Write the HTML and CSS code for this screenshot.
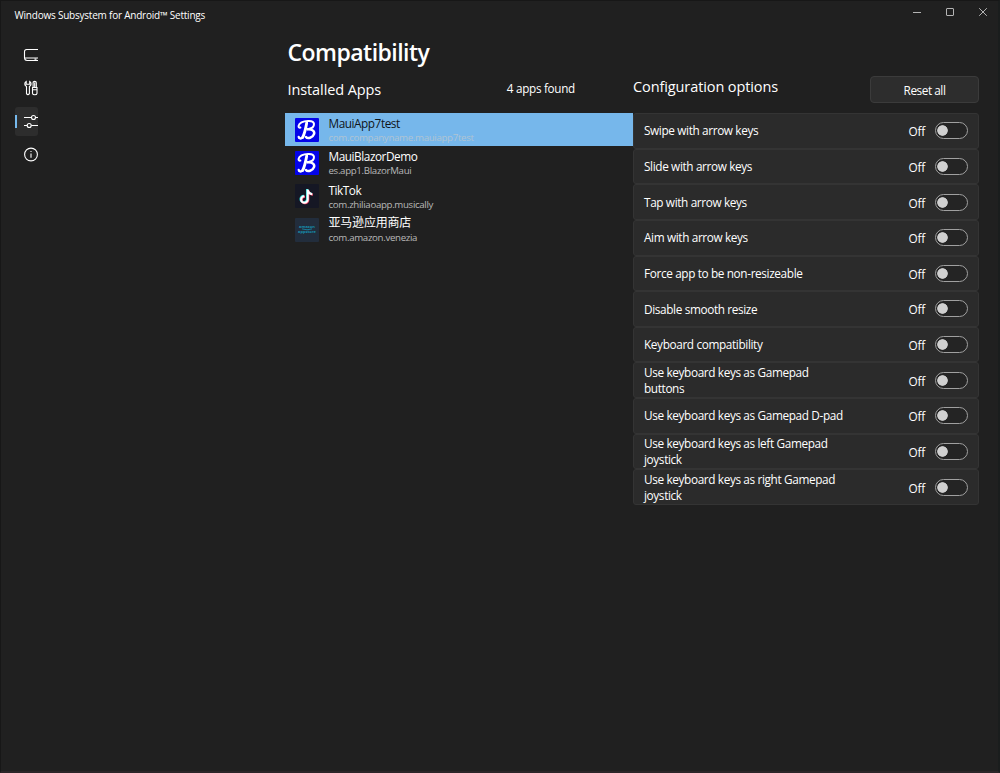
FILE: index.html
```
<!DOCTYPE html>
<html lang="en">
<head>
<meta charset="utf-8">
<title>Windows Subsystem for Android™ Settings</title>
<link rel="stylesheet" href="styles.css">
</head>
<body>
<svg class="defs" width="0" height="0" aria-hidden="true">
  <symbol id="maui" viewBox="0 0 24 24">
    <rect width="24" height="24" rx="1" fill="#0404e8"/>
    <g fill="none" stroke="#fff" stroke-linecap="round" stroke-linejoin="round">
      <path stroke-width="2.900" d="M11.700 5C10.800 10 9.800 15.500 7.600 19.500"/>
      <path stroke-width="2" d="M5.400 9.600C2.600 10 3 6.300 6.500 4.300C10 2.500 18.600 1.900 19 5.800C19.200 9.200 16 10.800 12.600 11.200"/>
      <path stroke-width="2.500" d="M12.800 11.300C17.500 11 20 13.400 19 16.200C17.800 19.800 12.500 21.200 11 19"/>
      <path stroke-width="2.300" d="M7.400 19.700C6 21 3.800 20.700 3.700 18.900"/>
    </g>
  </symbol>
</svg>
<div class="window">
  <header class="titlebar">
    <span class="title">Windows Subsystem for Android™ Settings</span>
    <div class="controls">
      <svg width="10" height="10" viewBox="0 0 10 10"><path d="M1 5.500h8"/></svg>
      <svg width="10" height="10" viewBox="0 0 10 10"><rect x="1.500" y="1.500" width="7" height="7" rx=".5"/></svg>
      <svg width="10" height="10" viewBox="0 0 10 10"><path d="M1.200 1.200l7.600 7.600M8.800 1.200L1.200 8.800"/></svg>
    </div>
  </header>
  <div class="body">
    <nav class="nav">
      <a class="nav-item"><svg viewBox="0 0 15 16"><path d="M15 2.500H3.700Q1.500 2.500 1.500 4.700V10.500Q1.500 13.500 4.200 13.500H15M1.500 11H15M11.500 12.200h2"/></svg></a>
      <a class="nav-item"><svg viewBox="0 0 15 16"><path d="M3.200 1.400C1.300 2.400 1.200 5.300 3.500 6.500V13.600Q4.900 15.600 6.400 13.600V6.500C8.700 5.300 8.500 2.400 6.700 1.400V4.200H3.200ZM10.100 7.300V2.800Q10.100 1.400 11.700 1.400T13.300 2.800V7.300M9.500 7.500H14V13.300Q13.800 14.700 11.800 14.700T9.500 13.300ZM9.500 9.700H14M11.700 2.500V7"/></svg></a>
      <a class="nav-item selected"><svg viewBox="0 0 15 16"><path d="M1 4.500H8.500M12.600 4.500H15M1 12.500H4.200M8.300 12.500H15"/><circle cx="10.500" cy="4.500" r="2"/><circle cx="6.200" cy="12.500" r="2"/></svg></a>
      <a class="nav-item"><svg viewBox="0 0 15 16"><circle cx="8" cy="7.500" r="6.400"/><path d="M8 6.500v4.300M8 4v1.100"/></svg></a>
    </nav>
    <main class="main">
      <h1>Compatibility</h1>
      <div class="columns">
        <section class="apps">
          <div class="apps-head"><h2>Installed Apps</h2><span class="count">4 apps found</span></div>
          <ul class="app-list">
            <li class="app active"><svg class="logo"><use href="#maui"/></svg><div><div class="name">MauiApp7test</div><div class="pkg">com.companyname.mauiapp7test</div></div></li>
            <li class="app"><svg class="logo"><use href="#maui"/></svg><div><div class="name">MauiBlazorDemo</div><div class="pkg">es.app1.BlazorMaui</div></div></li>
            <li class="app"><svg class="logo" viewBox="0 0 24 24"><rect width="24" height="24" rx="1" fill="#151724"/><g fill="none" stroke-width="2.100"><path stroke="#27e0df" d="M12.100 5v10a3.300 3.300 0 1 1-3.300-3.300M12.100 5.500q.7 3.700 4.600 4.200"/><path stroke="#f33b62" d="M13.300 6v10a3.300 3.300 0 1 1-3.300-3.300M13.300 6.500q.7 3.700 4.600 4.200"/><path stroke="#fff" d="M12.700 5.500v10a3.300 3.300 0 1 1-3.300-3.300M12.700 6q.7 3.700 4.600 4.200"/></g></svg><div><div class="name">TikTok</div><div class="pkg">com.zhiliaoapp.musically</div></div></li>
            <li class="app"><svg class="logo" viewBox="0 0 24 24"><rect width="24" height="24" rx="1" fill="#222d3c"/><g class="store"><text x="12" y="10.300" text-anchor="middle">amazon</text><text x="12" y="15.300" text-anchor="middle">appstore</text></g><path fill="none" stroke="#168fae" stroke-width=".8" d="M7 10.900q5 1.800 10 0"/></svg><div><div class="name cjk">亚马逊应用商店</div><div class="pkg">com.amazon.venezia</div></div></li>
          </ul>
        </section>
        <section class="config">
          <div class="config-head"><h2>Configuration options</h2><button class="reset">Reset all</button></div>
          <div class="options">
            <div class="option"><span class="label">Swipe with arrow keys</span><span class="off">Off</span><i class="toggle"></i></div>
            <div class="option"><span class="label">Slide with arrow keys</span><span class="off">Off</span><i class="toggle"></i></div>
            <div class="option"><span class="label">Tap with arrow keys</span><span class="off">Off</span><i class="toggle"></i></div>
            <div class="option"><span class="label">Aim with arrow keys</span><span class="off">Off</span><i class="toggle"></i></div>
            <div class="option"><span class="label">Force app to be non-resizeable</span><span class="off">Off</span><i class="toggle"></i></div>
            <div class="option"><span class="label">Disable smooth resize</span><span class="off">Off</span><i class="toggle"></i></div>
            <div class="option"><span class="label">Keyboard compatibility</span><span class="off">Off</span><i class="toggle"></i></div>
            <div class="option"><span class="label">Use keyboard keys as Gamepad<br>buttons</span><span class="off">Off</span><i class="toggle"></i></div>
            <div class="option"><span class="label">Use keyboard keys as Gamepad D-pad</span><span class="off">Off</span><i class="toggle"></i></div>
            <div class="option"><span class="label">Use keyboard keys as left Gamepad<br>joystick</span><span class="off">Off</span><i class="toggle"></i></div>
            <div class="option"><span class="label">Use keyboard keys as right Gamepad<br>joystick</span><span class="off">Off</span><i class="toggle"></i></div>
          </div>
        </section>
      </div>
    </main>
  </div>
</div>
</body>
</html>
```
FILE: styles.css
```
* { box-sizing: border-box; }
body {
  margin: 0;
  background: #202020;
  color: #fff;
  font: 12px/16px "Open Sans", "Noto Sans CJK SC", sans-serif;
}
.defs { display: block; }
.window {
  width: 1000px;
  height: 773px;
  border: 1px solid #171717;
  border-right: 2px solid #1a1d1d;
  border-bottom: 2px solid #2b2528;
  overflow: hidden;
}
.titlebar {
  height: 31px;
  padding: 6px 10px 0 13.500px;
  display: flex;
  justify-content: space-between;
}
.title { font-size: 10px; line-height: 17px; letter-spacing: -.22px; white-space: nowrap; }
.controls { display: flex; gap: 23px; }
.controls svg { fill: none; stroke: #b4b4b4; stroke-width: 1; }
.body { display: flex; }
.nav { width: 284px; padding: 8.500px 0 0 13.500px; display: flex; flex-direction: column; gap: 4px; }
.nav-item {
  width: 23.500px;
  height: 29.200px;
  border-radius: 3px;
  display: flex;
  align-items: center;
  justify-content: flex-end;
}
.nav-item svg { width: 15px; height: 16px; fill: none; stroke: #fff; stroke-width: 1.100; }
.nav-item.selected {
  background: linear-gradient(#76b9ed, #76b9ed) 0 50% / 2px 13px no-repeat, #2d2d2d;
}
h1, h2 { margin: 0; white-space: nowrap; }
h1 { font-size: 23px; line-height: 32px; font-weight: 600; letter-spacing: -.53px; padding: 4px 0 0 2.500px; }
h2 { font-size: 14.500px; line-height: 20px; font-weight: 400; letter-spacing: -.1px; }
.columns { display: flex; }
.apps { width: 348px; }
.apps-head { height: 45px; padding: 12px 58px 0 2.500px; display: flex; justify-content: space-between; }
.count { font-size: 11.700px; line-height: 16px; letter-spacing: -.28px; }
.app-list { list-style: none; margin: 0; padding: 0; }
.app { height: 33.300px; padding-left: 10px; display: flex; align-items: center; gap: 9.500px; }
.app.active { background: #76b7eb; color: #10151a; }
.logo { width: 24px; height: 24px; flex: none; }
.store { fill: #168fae; font: 700 4px "Open Sans", sans-serif; }
.name { font-size: 11.800px; line-height: 16px; letter-spacing: -.45px; white-space: nowrap; }
.name.cjk { font-size: 12px; letter-spacing: -.2px; }
.pkg { font-size: 9.700px; line-height: 13px; color: #b8b8b8; letter-spacing: -.33px; white-space: nowrap; }
.active .pkg { color: #b0c4d3; }
.config { width: 346px; }
.config-head { height: 45px; padding-top: 8px; display: flex; justify-content: space-between; }
.config-head h2 { padding-top: 1px; }
.reset {
  width: 109px;
  height: 27px;
  border: 1px solid #3b3b3b;
  border-radius: 4px;
  background: #2d2d2d;
  color: #fff;
  font: 11.800px/16px "Open Sans", sans-serif;
  letter-spacing: -.45px;
  padding: 0;
}
.option {
  height: 35.640px;
  border: 1px solid #343434;
  border-radius: 3px;
  background: #2b2b2b;
  padding: 0 10px;
  display: flex;
  align-items: center;
}
.label { flex: 1; padding-top: 1px; font-size: 11.800px; line-height: 15.800px; letter-spacing: -.37px; white-space: nowrap; }
.off { padding-top: 1px; font-size: 11.800px; letter-spacing: -.2px; margin-right: 10px; }
.toggle {
  width: 33px;
  height: 17px;
  border: 1px solid #a0a0a0;
  border-radius: 9px;
  background: radial-gradient(circle at 6.500px 7.500px, #d0d0d0 4.900px, transparent 5.600px), #242424;
}
```
